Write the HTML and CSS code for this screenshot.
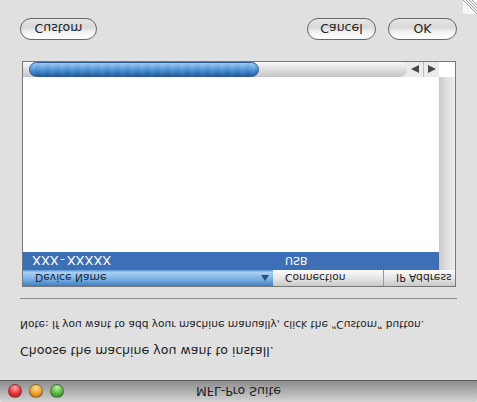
FILE: index.html
```html
<!DOCTYPE html>
<html lang="en">
<head>
<meta charset="utf-8">
<title>MFL-Pro Suite</title>
<link rel="stylesheet" href="styles.css">
</head>
<body>
<div class="window">
  <header class="titlebar">
    <div class="lights">
      <span class="light red"></span>
      <span class="light amber"></span>
      <span class="light green"></span>
    </div>
    <div class="title">MFL-Pro Suite</div>
  </header>
  <main class="content">
    <p class="lead">Choose the machine you want to install.</p>
    <p class="note">Note: If you want to add your machine manually, click the “Custom” button.</p>
    <hr class="rule">
    <section class="table">
      <div class="thead">
        <div class="th th-device">Device Name<svg class="sort" width="8" height="6" viewBox="0 0 8 6"><path d="M0 6 4 0 8 6z"/></svg></div>
        <div class="th th-conn">Connection</div>
        <div class="th th-ip">IP Address</div>
      </div>
      <div class="tbody">
        <div class="list">
          <div class="row">
            <span class="cell-name">XXX - XXXXX</span>
            <span class="cell-conn">USB</span>
          </div>
        </div>
        <div class="vscroll"></div>
      </div>
      <div class="hscroll">
        <div class="track">
          <div class="track-fill">
            <div class="thumb"></div>
          </div>
          <div class="arrows">
            <span class="arrow"><svg width="8" height="8" viewBox="0 0 8 8"><path d="M8 0 0 4 8 8z"/></svg></span>
            <span class="arrow"><svg width="8" height="8" viewBox="0 0 8 8"><path d="M0 0 8 4 0 8z"/></svg></span>
          </div>
        </div>
        <div class="corner"></div>
      </div>
    </section>
    <div class="buttons">
      <button class="btn btn-custom">Custom</button>
      <button class="btn btn-cancel">Cancel</button>
      <button class="btn btn-ok">OK</button>
    </div>
  </main>
  <svg class="grip" width="14" height="14" viewBox="0 0 14 14">
    <rect width="14" height="14" fill="#f6f6f6"/>
    <path d="M0 14 14 0M3 14 14 3M6 14 14 6M9 14 14 9" stroke="#9a9a9a" stroke-width="1" fill="none"/>
  </svg>
</div>
</body>
</html>
```
FILE: styles.css
```css
* { box-sizing: border-box; }
html, body { margin: 0; padding: 0; }
body { width: 477px; height: 402px; overflow: hidden; background: #e0e0e0; }

.window {
  position: relative;
  width: 477px;
  height: 402px;
  background: #e0e0e0;
  transform: scaleY(-1);
  font-family: "DejaVu Sans", "Liberation Sans", sans-serif;
  color: #222;
  overflow: hidden;
}

.titlebar {
  position: relative;
  height: 22px;
  display: flex;
  align-items: center;
  justify-content: center;
  background: linear-gradient(to bottom, #d2d2d2 0%, #b4b4b4 45%, #8c8c8c 100%);
  border-bottom: 1px solid #5c5c5c;
  border-radius: 4px 4px 0 0;
}
.lights {
  position: absolute;
  left: 8px;
  top: 4px;
  display: flex;
  gap: 7px;
}
.light { width: 14px; height: 14px; border-radius: 50%; border: 1px solid rgba(70,70,70,.55); }
.red { background: radial-gradient(circle at 50% 75%, #ffa8a8 0, #ea2f38 55%, #a3161e 100%); }
.amber { background: radial-gradient(circle at 50% 75%, #ffdc98 0, #ee9d2a 55%, #b26a10 100%); }
.green { background: radial-gradient(circle at 50% 75%, #bff2a4 0, #58b53c 55%, #2f7d24 100%); }
.title { font-size: 12.5px; color: #222; }

.content { display: flow-root; }
.lead { margin: 21px 0 0 20px; font-size: 12.6px; line-height: 16px; }
.note { margin: 11px 0 0 20px; font-size: 10.6px; line-height: 14px; }
.rule { margin: 19px 20px 0 20px; border: 0; border-top: 1px solid #8b8b8b; height: 0; }

.table {
  display: flex;
  flex-direction: column;
  margin: 11px 0 0 22px;
  width: 434px;
  height: 226px;
  border: 1px solid #777;
  background: #fff;
}
.thead { display: flex; height: 16px; flex: none; font-size: 10.7px; }
.th { display: flex; align-items: center; height: 100%; white-space: nowrap; overflow: hidden; }
.th-device {
  width: 250px;
  padding-left: 12px;
  position: relative;
  background: linear-gradient(to bottom, #3f7fc4 0%, #7db2e4 45%, #a9d0f3 85%, #5c96d3 100%);
  color: #16263a;
}
.sort { position: absolute; right: 4px; top: 5px; fill: #2d4f78; }
.th-conn {
  width: 111px;
  padding-left: 12px;
  background: linear-gradient(to bottom, #c9c9c9 0%, #e6e6e6 50%, #fbfbfb 100%);
  border-right: 1px solid #999;
}
.th-ip {
  flex: 1;
  padding-left: 12px;
  background: linear-gradient(to bottom, #c9c9c9 0%, #e6e6e6 50%, #fbfbfb 100%);
}

.tbody { display: flex; flex: 1; min-height: 0; }
.list { flex: 1; background: #fff; }
.row {
  display: flex;
  align-items: center;
  height: 18px;
  background: #3d6fb6;
  color: #fff;
  font-size: 13px;
}
.cell-name { width: 262px; padding-left: 9px; word-spacing: -2.5px; white-space: nowrap; }
.cell-conn { font-size: 10.9px; }
.vscroll {
  width: 16px;
  flex: none;
  background: linear-gradient(to right, #c8c8c8 0%, #dcdcdc 40%, #eeeeee 100%);
}

.hscroll { display: flex; height: 15px; flex: none; }
.track { flex: 1; display: flex; background: #ebebeb; }
.track-fill {
  flex: 1;
  position: relative;
  border-radius: 0 8px 8px 0;
  background: linear-gradient(to bottom, #c6c6c6 0%, #dedede 50%, #f8f8f8 100%);
}
.thumb {
  position: absolute;
  left: 6px;
  top: 0;
  width: 230px;
  height: 15px;
  border-radius: 8px;
  border: 1px solid #2c5b92;
  background:
    repeating-linear-gradient(to right, rgba(255,255,255,.04) 0 5px, rgba(0,0,0,.02) 5px 10px),
    linear-gradient(to bottom, #235b9b 0%, #3f84cc 35%, #69a7e2 65%, #9cc9f0 100%);
}
.arrows { display: flex; flex: none; height: 15px; }
.arrow {
  width: 16px;
  height: 15px;
  display: flex;
  align-items: center;
  justify-content: center;
  fill: #484848;
}
.arrow + .arrow { border-left: 1px solid #bdbdbd; }
.corner { width: 16px; flex: none; background: #fff; }

.buttons {
  display: flex;
  justify-content: flex-end;
  gap: 12px;
  margin: 21px 20px 0 20px;
}
.btn {
  height: 22px;
  padding: 0;
  width: 69px;
  border: 1.5px solid #666;
  border-radius: 11px;
  background: linear-gradient(to bottom, #fff 0%, #f2f2f2 35%, #d8d8d8 60%, #e6e6e6 100%);
  font-family: "DejaVu Sans", "Liberation Sans", sans-serif;
  font-size: 12.5px;
  color: #222;
}
.btn-custom { width: 77px; margin-right: auto; }

.grip { position: absolute; right: 0; bottom: 0; }
```
